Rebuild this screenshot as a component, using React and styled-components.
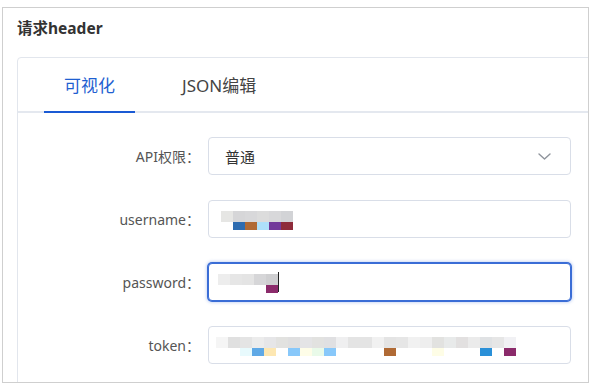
import React from "react";
import styled, { createGlobalStyle } from "styled-components";

const GlobalStyle = createGlobalStyle`
  html, body {
    margin: 0;
    padding: 0;
    background: #fff;
  }
  body {
    font-family: "Noto Sans", "Noto Sans CJK SC", sans-serif;
    color: #333;
  }
`;

const Panel = styled.section`
  margin: 7px 0 0 2px;
  width: 585px;
  height: 374px;
  border: 1px solid #cfcfcf;
  overflow: hidden;
  box-sizing: content-box;
`;

const Title = styled.h3`
  margin: 0;
  padding: 11px 0 0 14px;
  height: 38px;
  font-size: 15.5px;
  font-weight: 700;
  line-height: 19px;
  color: #333;
`;

const Card = styled.div`
  margin-left: 14px;
  margin-right: -12px;
  border: 1px solid #e2e6ed;
  border-radius: 4px 0 0 0;
  min-height: 400px;
`;

const TabList = styled.div`
  display: flex;
  gap: 27px;
  padding-left: 26px;
  border-bottom: 2px solid #e4e8ef;
`;

const Tab = styled.div`
  height: 53px;
  padding: 0 20px;
  display: flex;
  align-items: center;
  font-size: 17px;
  color: ${(p) => (p.active ? "#1f5fd1" : "#444")};
  border-bottom: 2px solid ${(p) => (p.active ? "#1a5ad4" : "transparent")};
  margin-bottom: -2px;
`;

const Form = styled.div`
  display: grid;
  grid-template-columns: 182px 363px;
  column-gap: 8px;
  row-gap: 25px;
  padding-top: 24px;
`;

const Label = styled.label`
  display: flex;
  align-items: center;
  justify-content: flex-end;
  font-size: 14px;
  color: #555;
`;

const Field = styled.div`
  height: 38px;
  box-sizing: border-box;
  border: 1px solid ${(p) => (p.focused ? "#3a6dd6" : "#d9dee8")};
  border-radius: 4px;
  box-shadow: ${(p) =>
    p.focused ? "0 0 0 1px #3a6dd6, 0 0 3px 2px rgba(58,109,214,0.25)" : "none"};
  display: flex;
  align-items: center;
  padding-left: ${(p) => p.inset}px;
  padding-right: 19px;
  background: #fff;
`;

const SelectValue = styled.span`
  flex: 1;
  font-size: 15px;
  color: #333;
`;

const Pixels = styled.div`
  display: flex;
  flex-direction: column;
  margin-top: 2px;
`;

const PixelRow = styled.div`
  display: flex;
  height: ${(p) => p.h}px;
`;

const Pixel = styled.span`
  width: 12px;
  height: 100%;
  background: ${(p) => p.c || "transparent"};
`;

const Caret = styled.span`
  width: 1px;
  height: 20px;
  background: #222;
`;

const Chevron = () => (
  <svg width="13" height="7" viewBox="0 0 13 7">
    <path d="M1 1 L6.5 6 L12 1" fill="none" stroke="#8f949c" strokeWidth="1.4" strokeLinecap="round" strokeLinejoin="round" />
  </svg>
);

const Blur = ({ top, bottom }) => (
  <Pixels>
    <PixelRow h={11}>
      {top.map((c, i) => (
        <Pixel key={i} c={c} />
      ))}
    </PixelRow>
    <PixelRow h={8}>
      {bottom.map((c, i) => (
        <Pixel key={i} c={c} />
      ))}
    </PixelRow>
  </Pixels>
);

const userTop = ["#e6e6e4", "#d6d6d8", "#d8d8da", "#dcdcdc", "#d8d8da", "#d2d3d6"];
const userBottom = [null, "#2e6cb0", "#b06a35", "#aee0fa", "#733a9a", "#8e2b3a"];

const passTop = ["#ededed", "#e6e6e6", "#e4e4e4", "#d6d6d8", "#cfcfd1"];
const passBottom = [null, null, null, null, "#8b2b6b"];

const tokenTop = [
  "#f5f5f5", "#e0e0e0", "#e4e4e4", "#ececec", "#e6e6e8", "#e2e2e0", "#dfdfe0",
  "#e4e4e6", "#e2e2e0", "#e0e0e2", "#efeff0", "#e4e4e4", "#e4e4e4", "#f1f1f1",
  "#e4e4e4", "#e6e6e6", "#f1f1f1", "#eeeeee", "#e2e2e0", "#e8eaea", "#e2e0e0",
  "#ebebeb", "#e0e2e4", "#e6e6e6", "#f1f1f4",
];
const tokenBottom = Array(25).fill(null);
Object.assign(tokenBottom, {
  2: "#e8fafd",
  3: "#5fa9e6",
  4: "#fde7b2",
  6: "#88c8fa",
  7: "#fefde8",
  8: "#e9fae9",
  9: "#88c8fa",
  14: "#b06a35",
  18: "#fefde6",
  22: "#2a90d8",
  24: "#8b2b6b",
});

export default function App() {
  return (
    <>
      <GlobalStyle />
      <Panel>
        <Title>请求header</Title>
        <Card>
          <TabList>
            <Tab active>可视化</Tab>
            <Tab>JSON编辑</Tab>
          </TabList>
          <Form>
            <Label>API权限：</Label>
            <Field inset={16}>
              <SelectValue>普通</SelectValue>
              <Chevron />
            </Field>

            <Label>username：</Label>
            <Field inset={12}>
              <Blur top={userTop} bottom={userBottom} />
            </Field>

            <Label>password：</Label>
            <Field inset={9} focused>
              <Blur top={passTop} bottom={passBottom} />
              <Caret />
            </Field>

            <Label>token：</Label>
            <Field inset={7}>
              <Blur top={tokenTop} bottom={tokenBottom} />
            </Field>
          </Form>
        </Card>
      </Panel>
    </>
  );
}
